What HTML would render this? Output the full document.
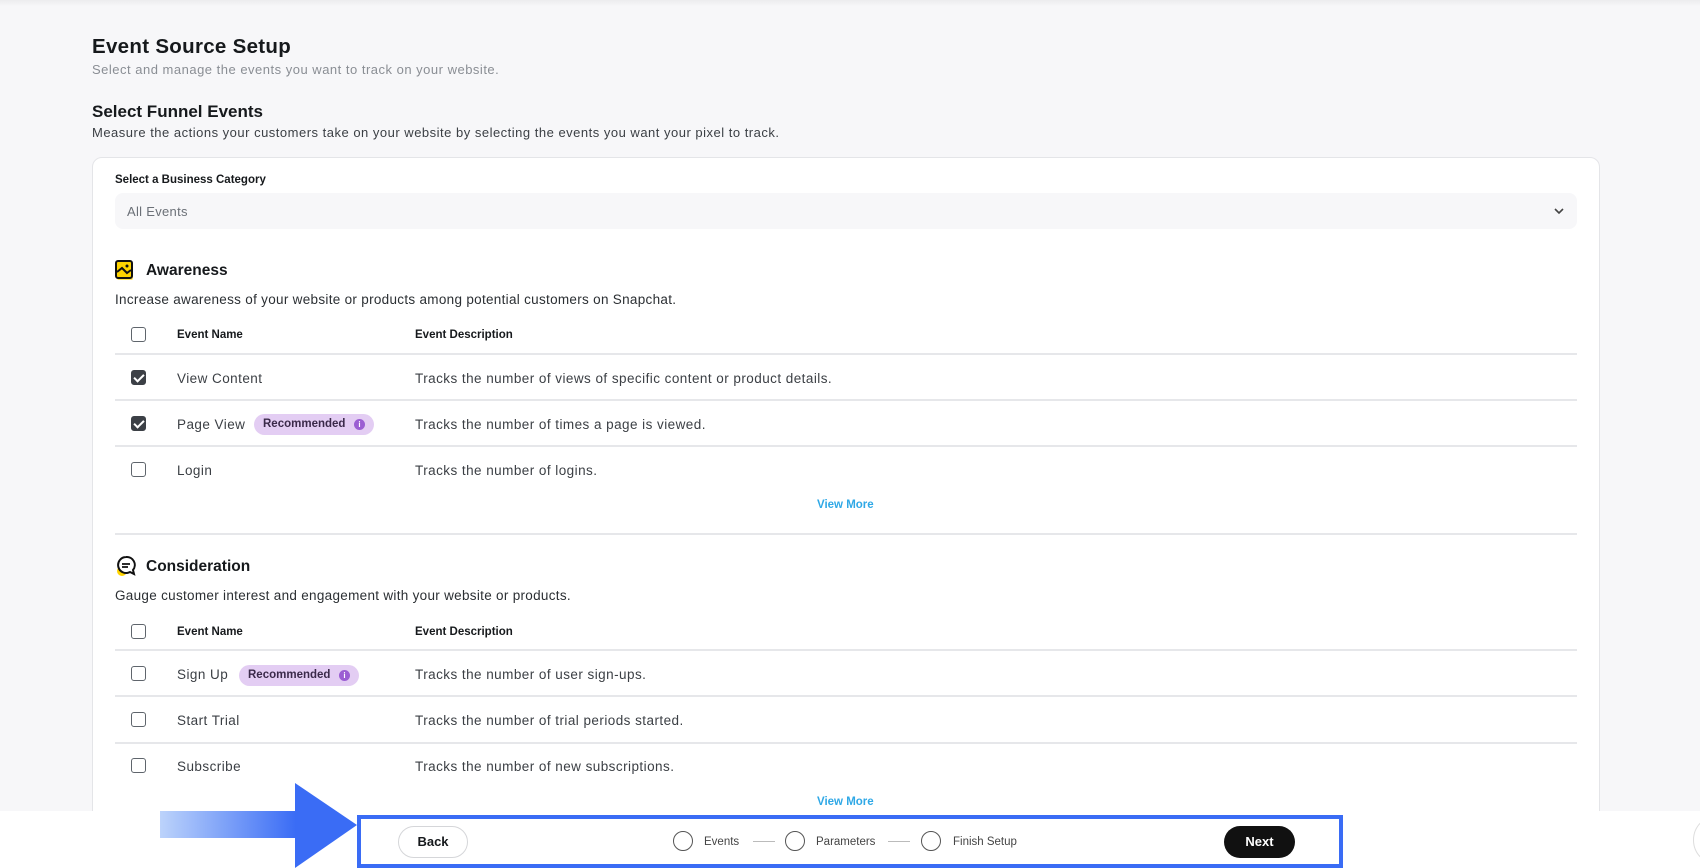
<!DOCTYPE html>
<html><head><style>
*{box-sizing:border-box;margin:0;padding:0}
html,body{width:1700px;height:868px;overflow:hidden}
body{background:#f7f7f9;font-family:"Liberation Sans",sans-serif;color:#16191c;position:relative}
.a{position:absolute;white-space:nowrap}
.card{position:absolute;left:92px;top:157px;width:1508px;height:700px;background:#fff;border:1px solid #e4e5e8;border-radius:10px}
.t{font-size:13.5px;color:#3b3f44;letter-spacing:0.45px}
.h{font-size:11.5px;font-weight:bold;color:#16191c}
.line{position:absolute;left:115px;width:1462px;height:2px;background:#e6e7ea}
.cb{position:absolute;left:131px;width:15px;height:15px;border:1.5px solid #5f656c;border-radius:3px;background:#fff}
.cb.on{background:#3c4046;border-color:#3c4046}
.cb.on:after{content:"";position:absolute;left:4px;top:1px;width:4px;height:8px;border:solid #fff;border-width:0 2px 2px 0;transform:rotate(45deg)}
.pill{position:absolute;height:21px;border-radius:11px;background:#e3cdf3;font-size:11.5px;font-weight:bold;color:#3b2a4a;padding:4px 0 0 9px}
.pill i{position:absolute;right:9px;top:5px;width:11px;height:11px;border-radius:50%;background:#9b5ed3;color:#fff;font-size:8px;font-style:normal;text-align:center;line-height:11px}
.vm{font-size:11.5px;font-weight:bold;color:#2fa8e6}
.step{position:absolute;top:831px;width:20px;height:20px;border:1.5px solid #555;border-radius:50%;background:#fff}
.sl{position:absolute;top:841px;height:1px;background:#bbb}
</style></head><body>
<div style="position:absolute;left:0;top:0;width:1700px;height:6px;background:linear-gradient(#ececee,#f7f7f9)"></div>
<div class="a" style="left:92px;top:35px;font-size:20.5px;font-weight:bold;letter-spacing:0.3px">Event Source Setup</div>
<div class="a" style="left:92px;top:62px;font-size:13px;color:#8a8e94;letter-spacing:0.5px">Select and manage the events you want to track on your website.</div>
<div class="a" style="left:92px;top:102px;font-size:17px;font-weight:bold">Select Funnel Events</div>
<div class="a" style="left:92px;top:125px;font-size:13px;color:#3b3f44;letter-spacing:0.5px">Measure the actions your customers take on your website by selecting the events you want your pixel to track.</div>
<div class="card"></div>
<div class="a h" style="left:115px;top:174px">Select a Business Category</div>
<div class="a" style="left:115px;top:193px;width:1462px;height:36px;background:#f7f7f9;border-radius:8px"></div>
<div class="a" style="left:127px;top:204px;font-size:13px;color:#6b7077;letter-spacing:0.3px">All Events</div>
<svg class="a" style="left:1553px;top:205px" width="12" height="12" viewBox="0 0 12 12"><path d="M2 4l4 4 4-4" fill="none" stroke="#444" stroke-width="1.6"/></svg>

<svg class="a" style="left:115px;top:260px" width="20" height="22" viewBox="0 0 20 22"><rect x="2" y="3" width="16" height="17" rx="2" fill="#ffe45c"/><rect x="1" y="1" width="16" height="17" rx="2" fill="#ffd400" stroke="#111" stroke-width="2"/><path d="M2 12l5-4 5 5 4-3" fill="none" stroke="#111" stroke-width="2"/><circle cx="12" cy="6" r="1.5" fill="#111"/></svg>
<div class="a" style="left:146px;top:262px;font-size:15.5px;font-weight:bold">Awareness</div>
<div class="a t" style="left:115px;top:292px;color:#2b2f33;letter-spacing:0.3px">Increase awareness of your website or products among potential customers on Snapchat.</div>
<div class="cb" style="top:327px"></div>
<div class="a h" style="left:177px;top:329px">Event Name</div>
<div class="a h" style="left:415px;top:329px">Event Description</div>
<div class="line" style="top:353px"></div>
<div class="cb on" style="top:370px"></div>
<div class="a t" style="left:177px;top:371px">View Content</div>
<div class="a t" style="left:415px;top:371px">Tracks the number of views of specific content or product details.</div>
<div class="line" style="top:399px"></div>
<div class="cb on" style="top:416px"></div>
<div class="a t" style="left:177px;top:417px">Page View</div>
<div class="pill" style="left:254px;top:414px;width:120px">Recommended<i>i</i></div>
<div class="a t" style="left:415px;top:417px">Tracks the number of times a page is viewed.</div>
<div class="line" style="top:445px"></div>
<div class="cb" style="top:462px"></div>
<div class="a t" style="left:177px;top:463px">Login</div>
<div class="a t" style="left:415px;top:463px">Tracks the number of logins.</div>
<div class="a vm" style="left:817px;top:499px">View More</div>
<div class="line" style="top:533px"></div>

<svg class="a" style="left:115px;top:555px" width="22" height="22" viewBox="0 0 22 22"><circle cx="7" cy="16" r="5" fill="#ffd400"/><path d="M11 2a8 8 0 1 0 4 15l4 2-1-4A8 8 0 0 0 11 2z" fill="#fff" stroke="#111" stroke-width="2"/><path d="M7 9h8M7 12h6" stroke="#111" stroke-width="1.8"/></svg>
<div class="a" style="left:146px;top:558px;font-size:15.5px;font-weight:bold">Consideration</div>
<div class="a t" style="left:115px;top:588px;color:#2b2f33;letter-spacing:0.3px">Gauge customer interest and engagement with your website or products.</div>
<div class="cb" style="top:624px"></div>
<div class="a h" style="left:177px;top:626px">Event Name</div>
<div class="a h" style="left:415px;top:626px">Event Description</div>
<div class="line" style="top:649px"></div>
<div class="cb" style="top:666px"></div>
<div class="a t" style="left:177px;top:667px">Sign Up</div>
<div class="pill" style="left:239px;top:665px;width:120px">Recommended<i>i</i></div>
<div class="a t" style="left:415px;top:667px">Tracks the number of user sign-ups.</div>
<div class="line" style="top:695px"></div>
<div class="cb" style="top:712px"></div>
<div class="a t" style="left:177px;top:713px">Start Trial</div>
<div class="a t" style="left:415px;top:713px">Tracks the number of trial periods started.</div>
<div class="line" style="top:742px"></div>
<div class="cb" style="top:758px"></div>
<div class="a t" style="left:177px;top:759px">Subscribe</div>
<div class="a t" style="left:415px;top:759px">Tracks the number of new subscriptions.</div>
<div class="a vm" style="left:817px;top:796px">View More</div>

<div style="position:absolute;left:0;top:811px;width:1700px;height:57px;background:#fff"></div>
<div style="position:absolute;left:1693px;top:815px;width:50px;height:50px;border:1px solid #ddd;border-radius:50%"></div>
<div style="position:absolute;left:160px;top:811px;width:136px;height:27px;background:linear-gradient(90deg,#bcd3fb,#3a6cf5)"></div>
<svg class="a" style="left:295px;top:783px" width="64" height="85"><polygon points="0,0 62,42 0,85" fill="#3a6cf5"/></svg>
<div style="position:absolute;left:357px;top:815px;width:986px;height:53px;border:4px solid #3a6cf5"></div>
<div class="a" style="left:398px;top:826px;width:70px;height:32px;border:1px solid #d5d6d9;border-radius:16px;font-size:13px;font-weight:bold;text-align:center;line-height:30px">Back</div>
<div class="a" style="left:1224px;top:826px;width:71px;height:32px;background:#111;border-radius:16px;color:#fff;font-size:13px;font-weight:bold;text-align:center;line-height:32px">Next</div>
<div class="step" style="left:673px"></div><div class="a" style="left:704px;top:836px;font-size:11.5px;color:#444">Events</div>
<div class="sl" style="left:753px;width:22px"></div>
<div class="step" style="left:785px"></div><div class="a" style="left:816px;top:836px;font-size:11.5px;color:#444">Parameters</div>
<div class="sl" style="left:888px;width:22px"></div>
<div class="step" style="left:921px"></div><div class="a" style="left:953px;top:836px;font-size:11.5px;color:#444">Finish Setup</div>
</body></html>
